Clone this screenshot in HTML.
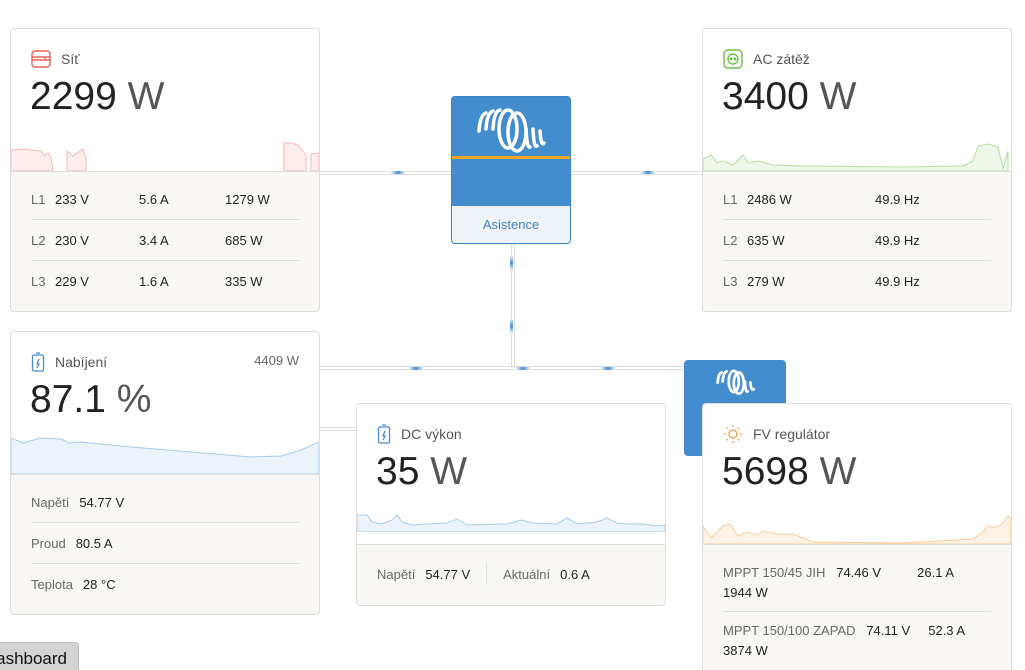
<!DOCTYPE html>
<html style="width:1025px;height:670px;overflow:hidden"><head><meta charset="utf-8"><style>
*{box-sizing:border-box;margin:0;padding:0}
body{width:1025px;height:670px;overflow:hidden;background:#fff;font-family:"Liberation Sans",sans-serif;position:relative;color:#222}
.card{position:absolute;border:1px solid #ddd;border-radius:4px;background:#f8f7f4;overflow:hidden}
.top{position:absolute;left:0;right:0;top:0;background:#fff;border-bottom:1px solid #ddd}
.title{position:absolute;left:20px;top:20px;font-size:14px;color:#555;display:flex;align-items:center;gap:10px}
.big{position:absolute;left:19px;top:46px;font-size:39px;color:#222}
.big span{color:#555}
.rows{position:absolute;left:20px;right:20px}
.row{height:41px;border-bottom:1px solid #ddd;font-size:13px;display:flex;align-items:center;color:#222}
.row:last-child{border-bottom:none}
.lab{color:#666}
.hl{position:absolute;height:4px;border-top:1px solid #ddd;border-bottom:1px solid #ddd;background:#fff}
.vl{position:absolute;width:4px;border-left:1px solid #ddd;border-right:1px solid #ddd;background:#fff}
.dot{position:absolute;height:3px;width:16px;background:linear-gradient(90deg,#fff,#4a8dd0,#fff)}
svg.ch{position:absolute;left:0;bottom:0}
</style></head><body>
<div class="hl" style="left:318px;top:171px;width:135px"></div>
<div class="hl" style="left:570px;top:171px;width:134px"></div>
<div class="dot" style="left:390px;top:171px"></div>
<div class="dot" style="left:640px;top:171px"></div>
<div class="vl" style="left:511px;top:242px;height:128px"></div>
<div class="hl" style="left:318px;top:366px;width:370px"></div>
<div class="dot" style="left:408px;top:367px"></div>
<div class="dot" style="left:515px;top:367px"></div>
<div class="dot" style="left:600px;top:367px"></div>
<div class="dot" style="left:510px;top:255px;width:3px;height:16px;background:linear-gradient(#fff,#4a8dd0,#fff)"></div>
<div class="dot" style="left:510px;top:318px;width:3px;height:16px;background:linear-gradient(#fff,#4a8dd0,#fff)"></div>
<div class="hl" style="left:318px;top:427px;width:40px"></div>

<div style="position:absolute;left:451px;top:96px;width:120px;height:148px;border-radius:4px;background:#438dcf;overflow:hidden;border:1px solid #3d84c6">
 <svg style="position:absolute;left:24px;top:8px" width="72" height="50" viewBox="0 0 72 50" fill="none" stroke="#fff" stroke-width="3.5" stroke-linecap="round">
  <path d="M3 26 Q4 10 10 8"/><path d="M10 24 Q11 8 17 6"/><path d="M17 24 Q18 6 24 5"/>
  <ellipse cx="32" cy="24" rx="9" ry="19"/><ellipse cx="41" cy="27" rx="9" ry="19"/>
  <path d="M50 24 Q51 44 54 42"/><path d="M57 24 Q58 44 61 41"/><path d="M64 26 Q65 42 68 38"/>
 </svg>
 <div style="position:absolute;left:0;right:0;top:59px;height:3px;background:#f5a623"></div>
 <div style="position:absolute;left:0;right:0;bottom:0;height:37px;background:#eef3f8;color:#4a7fb8;font-size:13px;text-align:center;line-height:37px">Asistence</div>
</div>
<div style="position:absolute;left:684px;top:360px;width:102px;height:96px;border-radius:4px;background:#438dcf">
 <svg style="position:absolute;left:32px;top:8px" width="40" height="28" viewBox="0 0 72 50" fill="none" stroke="#fff" stroke-width="5" stroke-linecap="round">
  <path d="M3 26 Q4 10 10 8"/><path d="M12 24 Q13 8 19 6"/><ellipse cx="32" cy="24" rx="9" ry="19"/><ellipse cx="41" cy="27" rx="9" ry="19"/><path d="M52 24 Q53 44 57 42"/><path d="M62 26 Q63 42 68 38"/>
 </svg>
</div>

<div class="card" style="left:10px;top:28px;width:310px;height:284px">
 <div class="top" style="height:143px">
  <div class="title"><svg width="20" height="20" viewBox="0 0 20 20" fill="none" stroke="#e8625c" stroke-width="1.4"><rect x="1" y="2" width="18" height="16" rx="3"/><path d="M1 8H19M1 11H19M14 8V11"/></svg>Síť</div>
  <div class="big">2299 <span>W</span></div>
  <svg class="ch" width="310" height="30" viewBox="0 0 310 30"><path d="M0 30V9L10 8L20 9L30 10L33 15L37 12L40 17L42 30ZM56 30V10L62 15L72 8L75 17V30ZM273 30V2L282 2L288 5L295 14V30ZM300 30V13L308 12V30Z" fill="#fdeeee" stroke="#f5b8b8"/></svg>
 </div>
 <div class="rows" style="top:150px">
  <div class="row"><span class="lab" style="width:24px">L1</span><span style="width:84px">233 V</span><span style="width:86px">5.6 A</span>1279 W</div>
  <div class="row"><span class="lab" style="width:24px">L2</span><span style="width:84px">230 V</span><span style="width:86px">3.4 A</span>685 W</div>
  <div class="row"><span class="lab" style="width:24px">L3</span><span style="width:84px">229 V</span><span style="width:86px">1.6 A</span>335 W</div>
 </div>
</div>

<div class="card" style="left:702px;top:28px;width:310px;height:284px">
 <div class="top" style="height:143px">
  <div class="title"><svg width="20" height="20" viewBox="0 0 20 20" fill="none" stroke="#6dbf4b" stroke-width="1.4"><rect x="1" y="1" width="18" height="18" rx="4"/><circle cx="10" cy="10" r="5"/><circle cx="8" cy="10" r=".8" fill="#6dbf4b"/><circle cx="12" cy="10" r=".8" fill="#6dbf4b"/></svg>AC zátěž</div>
  <div class="big">3400 <span>W</span></div>
  <svg class="ch" width="310" height="30" viewBox="0 0 310 30"><path d="M0 30V18L8 14L14 22L20 20L30 24L40 14L45 22L55 20L70 24L100 25L200 26L260 25L270 20L275 5L285 3L295 6L300 28L305 10V30Z" fill="#eef7e9" stroke="#b5dca0"/></svg>
 </div>
 <div class="rows" style="top:150px">
  <div class="row"><span class="lab" style="width:24px">L1</span><span style="width:128px">2486 W</span>49.9 Hz</div>
  <div class="row"><span class="lab" style="width:24px">L2</span><span style="width:128px">635 W</span>49.9 Hz</div>
  <div class="row"><span class="lab" style="width:24px">L3</span><span style="width:128px">279 W</span>49.9 Hz</div>
 </div>
</div>

<div class="card" style="left:10px;top:331px;width:310px;height:284px">
 <div class="top" style="height:143px">
  <div class="title"><svg width="14" height="20" viewBox="0 0 14 20" fill="none" stroke="#4a8dd0" stroke-width="1.3"><rect x="1.5" y="3" width="11" height="16" rx="1.5"/><path d="M5 1H9M8 7L6 12H8L6 16"/></svg>Nabíjení</div>
  <div style="position:absolute;right:20px;top:21px;font-size:13px;color:#666">4409 W</div>
  <div class="big">87.1 <span>%</span></div>
  <svg class="ch" width="310" height="40" viewBox="0 0 310 40"><path d="M0 40V4L12 9L30 4L50 5L58 9L70 8L120 13L180 18L240 23L270 22L290 16L308 8V40Z" fill="#ecf3fb" stroke="#a8c9ec"/></svg>
 </div>
 <div class="rows" style="top:150px">
  <div class="row"><span class="lab" style="margin-right:10px">Napětí</span>54.77 V</div>
  <div class="row"><span class="lab" style="margin-right:10px">Proud</span>80.5 A</div>
  <div class="row"><span class="lab" style="margin-right:10px">Teplota</span>28 °C</div>
 </div>
</div>

<div class="card" style="left:356px;top:403px;width:310px;height:203px">
 <div class="top" style="height:141px">
  <div class="title"><svg width="14" height="20" viewBox="0 0 14 20" fill="none" stroke="#4a8dd0" stroke-width="1.3"><rect x="1.5" y="3" width="11" height="16" rx="1.5"/><path d="M5 1H9M8 7L6 12H8L6 16"/></svg>DC výkon</div>
  <div class="big">35 <span>W</span></div>
  <svg class="ch" style="bottom:12px" width="310" height="20" viewBox="0 0 310 20"><path d="M0 20V3L10 3L15 10L25 12L35 8L40 3L45 10L55 13L70 12L90 11L100 7L110 13L150 12L165 8L175 11L200 12L210 6L220 12L240 10L250 6L260 11L270 12L285 12L300 14L308 13V20Z" fill="#ecf3fb" stroke="#a8c9ec"/></svg>
 </div>
 <div style="position:absolute;left:20px;top:150px;height:40px;display:flex;align-items:center;font-size:13px">
  <span class="lab" style="margin-right:10px">Napětí</span>54.77 V
  <span style="display:inline-block;width:1px;height:22px;background:#ddd;margin:0 16px"></span>
  <span class="lab" style="margin-right:10px">Aktuální</span>0.6 A
 </div>
</div>

<div class="card" style="left:702px;top:403px;width:310px;height:267px;border-bottom:none;border-radius:4px 4px 0 0">
 <div class="top" style="height:141px">
  <div class="title"><svg width="20" height="20" viewBox="0 0 20 20" fill="none" stroke="#f0a04b" stroke-width="1.3"><circle cx="10" cy="10" r="4"/><path d="M10 1V3M10 17V19M1 10H3M17 10H19M3.6 3.6L5 5M15 15L16.4 16.4M3.6 16.4L5 15M15 5L16.4 3.6"/></svg>FV regulátor</div>
  <div class="big">5698 <span>W</span></div>
  <svg class="ch" width="310" height="30" viewBox="0 0 310 30"><path d="M0 30V12L8 24L20 12L27 10L35 22L45 18L55 21L60 17L75 20L90 20L100 24L110 28L200 29L270 25L280 18L285 12L292 14L300 9L305 2L308 5V30Z" fill="#fdf3e6" stroke="#f6cf9b"/></svg>
 </div>
 <div style="position:absolute;left:20px;right:20px;top:150px;font-size:13px;line-height:20px">
  <div style="padding:9px 0 8px;border-bottom:1px solid #ddd"><span class="lab">MPPT 150/45 JIH</span>&nbsp;&nbsp; 74.46 V &nbsp;&nbsp;&nbsp;&nbsp;&nbsp;&nbsp;&nbsp;&nbsp; 26.1 A<br>1944 W</div>
  <div style="padding:9px 0"><span class="lab">MPPT 150/100 ZAPAD</span>&nbsp;&nbsp; 74.11 V &nbsp;&nbsp;&nbsp; 52.3 A<br>3874 W</div>
 </div>
</div>

<div style="position:absolute;left:-20px;top:642px;width:99px;height:34px;background:#d4d4d4;border:1px solid #bbb;border-radius:4px;font-size:17px;line-height:32px;text-align:right;padding-right:11px;color:#111">ashboard</div>
</body></html>
